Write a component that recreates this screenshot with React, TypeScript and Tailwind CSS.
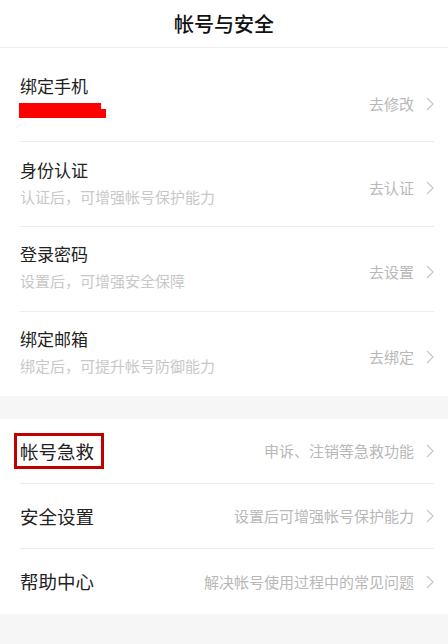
import type { ReactNode } from 'react';

const Chevron = () => (
  <svg width="8" height="14" viewBox="0 0 8 14" fill="none" className="shrink-0">
    <path d="M1 1 L7 7 L1 13" stroke="#c4c4c4" strokeWidth="1.1" />
  </svg>
);

type TopRow = {
  title: string;
  sub?: string;
  action: string;
  height: string;
  pad: string;
  phone?: boolean;
  last?: boolean;
};

const topRows: TopRow[] = [
  { title: '绑定手机', action: '去修改', height: 'h-[94px]', pad: 'pt-[28px]', phone: true },
  { title: '身份认证', sub: '认证后，可增强帐号保护能力', action: '去认证', height: 'h-[85px]', pad: 'pt-[18px]' },
  { title: '登录密码', sub: '设置后，可增强安全保障', action: '去设置', height: 'h-[85px]', pad: 'pt-[17px]' },
  { title: '绑定邮箱', sub: '绑定后，可提升帐号防御能力', action: '去绑定', height: 'h-[84px]', pad: 'pt-[17px]', last: true },
];

const bottomRows = [
  { title: '帐号急救', action: '申诉、注销等急救功能', marked: true },
  { title: '安全设置', action: '设置后可增强帐号保护能力' },
  { title: '帮助中心', action: '解决帐号使用过程中的常见问题', last: true },
];

const Group = ({ children }: { children: ReactNode }) => (
  <div className="bg-white pl-[20px] pr-[14px]">{children}</div>
);

export default function App() {
  return (
    <div
      className="w-full h-[644px] bg-[#f6f6f6] overflow-hidden"
      style={{ fontFamily: '"Noto Sans CJK SC", "Noto Sans", sans-serif' }}
    >
      {/* Header */}
      <div className="h-[48px] bg-white border-b border-[#ededed] flex items-center justify-center">
        <h1 className="text-[20px] leading-[24px] font-medium text-[#111]">帐号与安全</h1>
      </div>

      {/* Binding / verification */}
      <Group>
        {topRows.map((row) => (
          <div
            key={row.title}
            className={`${row.height} ${row.pad} flex items-start ${row.last ? '' : 'border-b border-[#ececec]'}`}
          >
            <div className="flex-1 min-w-0">
              <p className="text-[17px] leading-[20px] text-[#222]">{row.title}</p>
              {row.phone ? (
                <div className="mt-[7px] flex items-end">
                  <div className="w-[82px] h-[15px] bg-[#ff0000] -ml-[1px]" />
                  <div className="w-[5px] h-[9px] bg-[#ff0000]" />
                </div>
              ) : (
                <p className="mt-[7px] text-[15px] leading-[20px] text-[#c8c8c8]">{row.sub}</p>
              )}
            </div>
            <div className="mt-[18px] flex items-center gap-[12px]">
              <span className="text-[15px] leading-[20px] text-[#b8b8b8]">{row.action}</span>
              <Chevron />
            </div>
          </div>
        ))}
      </Group>

      <div className="h-[23px]" />

      {/* Help & settings */}
      <Group>
        {bottomRows.map((row) => (
          <div
            key={row.title}
            className={`h-[65px] flex items-center ${row.last ? '' : 'border-b border-[#ececec]'}`}
          >
            <div className="flex-1">
              <span className="relative inline-block text-[18.5px] leading-[24px] text-[#222]">
                {row.title}
                {row.marked && (
                  <span className="absolute left-[-6px] top-1/2 -translate-y-1/2 w-[90px] h-[36px] border-[3px] border-[#c00000]" />
                )}
              </span>
            </div>
            <div className="flex items-center gap-[12px]">
              <span className="text-[15px] leading-[20px] text-[#b8b8b8]">{row.action}</span>
              <Chevron />
            </div>
          </div>
        ))}
      </Group>
    </div>
  );
}
